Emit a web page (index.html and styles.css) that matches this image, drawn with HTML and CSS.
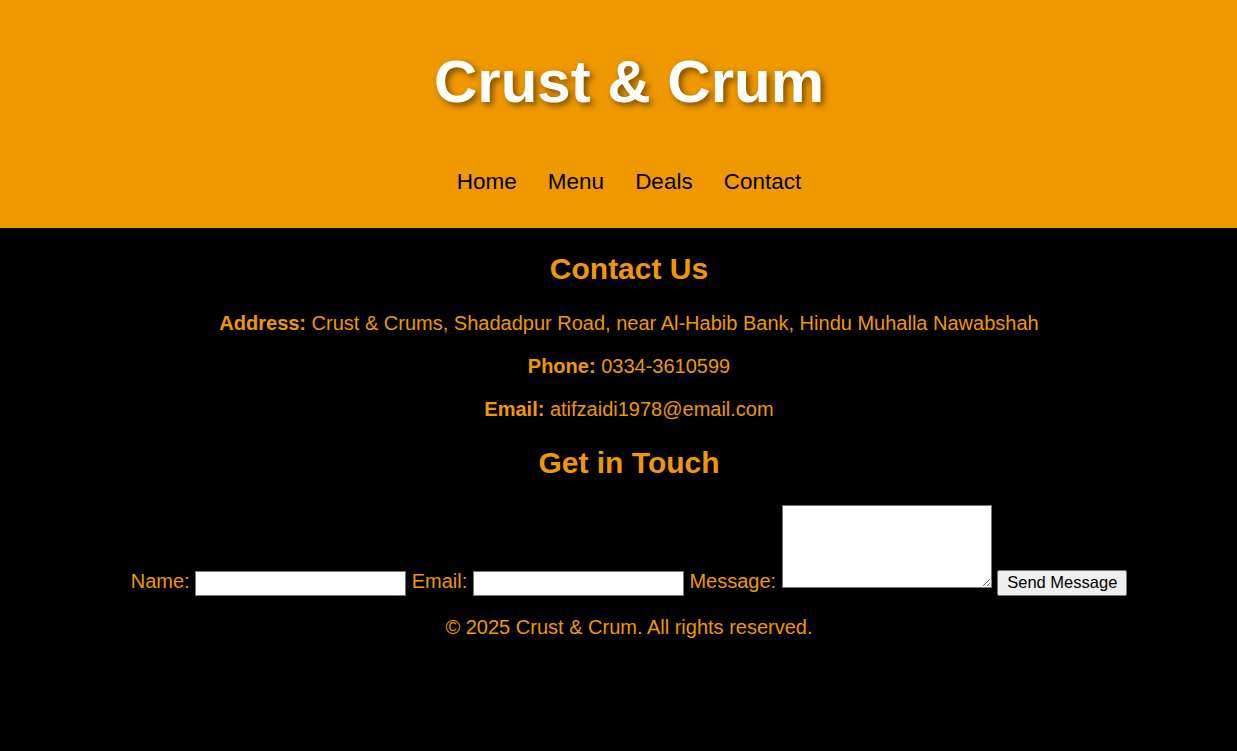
FILE: index.html
```html
<!DOCTYPE html>
<html lang="en">
<head>
<meta charset="utf-8">
<title>Crust &amp; Crum - Contact</title>
<link rel="stylesheet" href="styles.css">
</head>
<body>
<header class="site-header">
  <h1 class="brand">Crust &amp; Crum</h1>
  <nav class="nav">
    <a href="#" class="nav-link">Home</a>
    <a href="#" class="nav-link">Menu</a>
    <a href="#" class="nav-link">Deals</a>
    <a href="#" class="nav-link">Contact</a>
  </nav>
</header>
<main class="contact">
  <h2 class="section-title section-first">Contact Us</h2>
  <p class="info"><strong>Address:</strong> Crust &amp; Crums, Shadadpur Road, near Al-Habib Bank, Hindu Muhalla Nawabshah</p>
  <p class="info"><strong>Phone:</strong> 0334-3610599</p>
  <p class="info"><strong>Email:</strong> atifzaidi1978@email.com</p>
  <h2 class="section-title">Get in Touch</h2>
  <form class="form">
    <label>Name:</label> <input type="text" class="field"> <label>Email:</label> <input type="email" class="field"> <label>Message:</label> <textarea class="msg"></textarea> <button type="button" class="send">Send Message</button>
  </form>
  <p class="footer">© 2025 Crust &amp; Crum. All rights reserved.</p>
</main>
</body>
</html>
```

FILE: styles.css
```css
html, body {
  margin: 0;
  padding: 0;
  background: #000;
  font-family: "Liberation Sans", Arial, sans-serif;
}

.site-header {
  background: #f09800;
  text-align: center;
  padding: 47px 0 33px 21px;
}

.brand {
  margin: 0;
  font-size: 60px;
  line-height: 69px;
  font-weight: bold;
  color: #fff;
  text-shadow: 3px 3px 6px rgba(0, 0, 0, 0.5);
}

.nav {
  margin-top: 53px;
  display: flex;
  justify-content: center;
  gap: 31px;
  line-height: 26px;
}

.nav-link {
  color: #000;
  text-decoration: none;
  font-size: 22.5px;
}

.contact {
  text-align: center;
  color: #f09800;
  padding-left: 21px;
  font-size: 20px;
  overflow: hidden;
}

.section-title {
  font-size: 30px;
  line-height: 34.5px;
  margin: 25px 0;
  font-weight: bold;
}

.section-first {
  margin-top: 24px;
}

.info {
  margin: 20px 0;
  line-height: 23px;
}

.form {
  margin: 0;
  line-height: 23px;
}

.field {
  width: 211px;
  height: 25px;
  box-sizing: border-box;
  background: #fff;
  border: 1px solid #767676;
  margin: 0;
  padding: 1px 2px;
  font-size: 16px;
}

.msg {
  width: 210px;
  height: 83px;
  box-sizing: border-box;
  background: #fff;
  border: 1px solid #767676;
  margin: 0;
  vertical-align: baseline;
}

.send {
  width: 130px;
  height: 26px;
  box-sizing: border-box;
  font-family: "Liberation Sans", Arial, sans-serif;
  font-size: 16.5px;
  background: #efefef;
  color: #000;
  border: 1px solid #767676;
  border-radius: 2px;
  padding: 0 6px;
  margin: 0;
}

.footer {
  margin: 20px 0;
  line-height: 23px;
}
```
